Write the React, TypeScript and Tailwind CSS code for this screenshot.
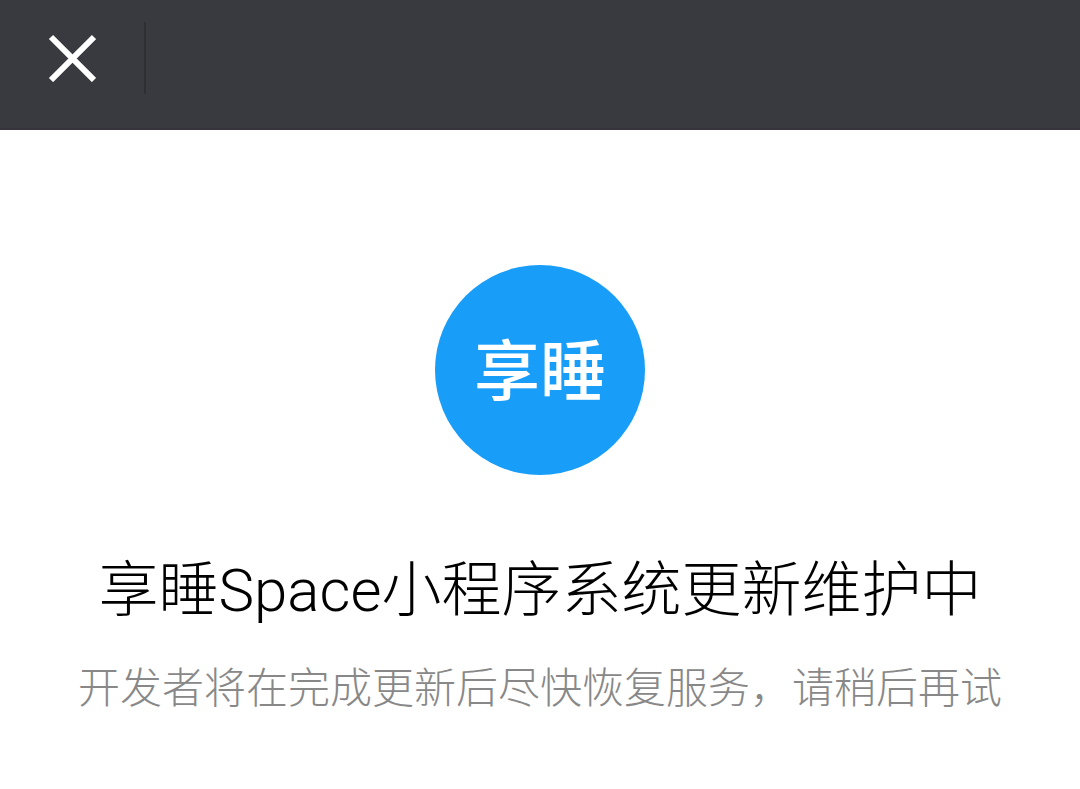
export default function App() {
  return (
    <div className="min-h-screen bg-white font-['Roboto','Noto_Sans_CJK_SC',sans-serif]">
      <TopBar />
      <MaintenanceNotice
        logo="享睡"
        title="享睡Space小程序系统更新维护中"
        message="开发者将在完成更新后尽快恢复服务，请稍后再试"
      />
    </div>
  );
}

function TopBar() {
  return (
    <header className="flex h-[130px] items-start border-b-2 border-[#36333a] bg-[#393a3f] pt-[22px]">
      <button
        type="button"
        aria-label="关闭"
        className="flex h-[72px] w-36 items-center justify-center text-white"
      >
        <svg
          className="size-12"
          viewBox="0 0 48 48"
          fill="none"
          stroke="currentColor"
          strokeWidth="6"
        >
          <path d="M3 3L46 46M46 3L3 46" />
        </svg>
      </button>
      <div className="h-[72px] w-0.5 bg-[#2e2f33]" />
    </header>
  );
}

interface MaintenanceNoticeProps {
  logo: string;
  title: string;
  message: string;
}
function MaintenanceNotice({ logo, title, message }: MaintenanceNoticeProps) {
  return (
    <main className="flex flex-col items-center pt-[135px] text-center">
      <div className="flex size-[210px] items-center justify-center rounded-full bg-[#189df8] pt-1.5 text-[66px] leading-none font-medium text-white">
        {logo}
      </div>
      <h1 className="mt-[72px] text-[60px] leading-[88px] font-light text-black">
        {title}
      </h1>
      <p className="mt-6 text-[42px] leading-[60px] font-light text-[#888888]">
        {message}
      </p>
    </main>
  );
}
